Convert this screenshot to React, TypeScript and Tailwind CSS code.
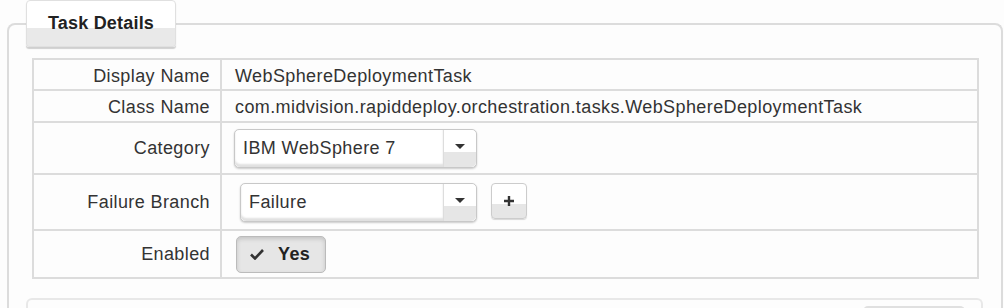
import { ReactNode } from "react";

export default function App() {
  return (
    <div className="relative h-[308px] w-[1004px] overflow-hidden bg-[#fdfdfd] font-['Liberation_Sans',Arial,sans-serif] text-[18px] tracking-[0.4px] text-[#333]">
      {/* fieldset */}
      <div className="ml-[7px] mt-[23px] w-[996px] rounded-t-[8px] border-2 border-b-0 border-[#dcdcdc] pb-[20px] pt-[33px]">
        <div className="ml-[23px] mr-[22px] border-2 border-[#dcdcdc]">
          <Row label="Display Name" h="h-[29px] pt-[3px]" first>
            <span className="pl-[1px]">WebSphereDeploymentTask</span>
          </Row>
          <Row label="Class Name" h="h-[30px] pt-[2px]">
            <span className="pl-[1px]">com.midvision.rapiddeploy.orchestration.tasks.WebSphereDeploymentTask</span>
          </Row>
          <Row label="Category" h="h-[50px]">
            <Select value="IBM WebSphere 7" width="w-[243px]" />
          </Row>
          <Row label="Failure Branch" h="h-[54px]">
            <div className="ml-[6px] flex items-center gap-[14px]">
              <Select value="Failure" width="w-[237px]" />
              <button className="mb-[3px] flex h-[36px] w-[36px] items-center justify-center rounded-[4px] border border-[#ccc] bg-[linear-gradient(#ffffff_0%,#ffffff_60%,#e6e6e6_60%,#e6e6e6_100%)] shadow-[0_1px_1px_rgba(0,0,0,0.15)]">
                <svg width="12" height="12" viewBox="0 0 12 12">
                  <path d="M6 1v10M1 6h10" stroke="#333" strokeWidth="2.4" />
                </svg>
              </button>
            </div>
          </Row>
          <Row label="Enabled" h="h-[46px]">
            <button className="ml-[2px] flex h-[37px] w-[90px] items-center gap-[14px] rounded-[5px] border border-[#bbb] bg-[#e6e6e6] pl-[13px] font-bold text-[#222] shadow-[inset_0_2px_4px_rgba(0,0,0,0.15)]">
              <svg width="14" height="12" viewBox="0 0 14 12">
                <path d="M1 6.5l4 4 8-8.5" fill="none" stroke="#333" strokeWidth="2.6" />
              </svg>
              Yes
            </button>
          </Row>
        </div>

        {/* next panel */}
        <div className="ml-[17px] mr-[18px] mt-[19px] h-[40px] rounded-t-[6px] border-2 border-b-0 border-[#e8e8e8] pr-[16px] pt-[6px]">
          <div className="ml-auto h-[30px] w-[102px] rounded-t-[5px] border-2 border-b-0 border-[#e0e0e0] bg-[#f7f7f7]" />
        </div>
      </div>

      {/* tab legend */}
      <div className="absolute left-[26px] top-0 flex h-[47px] w-[150px] items-center justify-center rounded-t-[4px] rounded-b-[3px] border border-[#e0e0e0] bg-[linear-gradient(#ffffff_0%,#ffffff_60%,#e9e9e9_60%,#e9e9e9_100%)] pb-[1px] font-bold tracking-[0.2px] text-[#222] shadow-[0_2px_1px_rgba(0,0,0,0.18)]">
        Task Details
      </div>
    </div>
  );
}

function Row({
  label,
  h,
  first,
  children,
}: {
  label: string;
  h: string;
  first?: boolean;
  children: ReactNode;
}) {
  return (
    <div className={`flex ${first ? "" : "border-t-2 border-[#dcdcdc]"}`}>
      <div className={`flex w-[188px] items-center justify-end border-r-2 border-[#dcdcdc] pr-[10px] ${h}`}>
        {label}
      </div>
      <div className={`flex items-center pl-[12px] ${h}`}>{children}</div>
    </div>
  );
}

function Select({ value, width }: { value: string; width: string }) {
  return (
    <div className={`flex h-[39px] ${width} rounded-[5px] border border-[#c8c8c8] bg-white shadow-[0_1px_2px_rgba(0,0,0,0.2)]`}>
      <div className="flex flex-1 items-center rounded-l-[5px] pl-[8px] shadow-[inset_0_-3px_2px_rgba(0,0,0,0.12)]">
        {value}
      </div>
      <div className="flex w-[33px] items-start justify-center rounded-r-[5px] border-l border-[#ddd] bg-[linear-gradient(#ffffff_0%,#ffffff_60%,#e6e6e6_60%,#e6e6e6_100%)] pt-[14px]">
        <svg width="10" height="5" viewBox="0 0 10 5">
          <path d="M0 0h10L5 5z" fill="#333" />
        </svg>
      </div>
    </div>
  );
}
